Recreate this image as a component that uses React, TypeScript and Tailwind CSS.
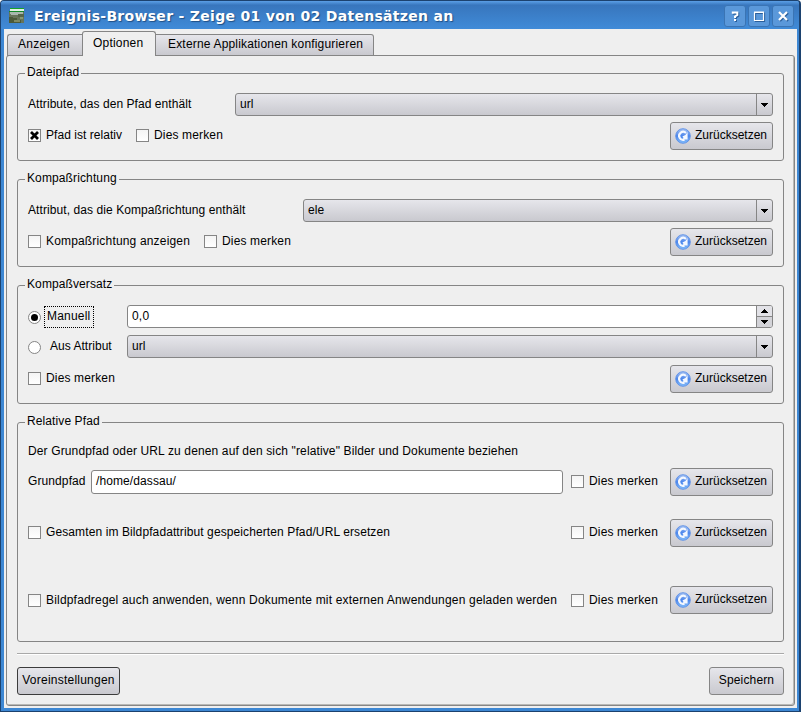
import type { ReactNode } from "react";

const raised = "bg-gradient-to-b from-[#e6e6eb] to-[#c9c9cf]";

function Text({ children, className = "" }: { children: ReactNode; className?: string }) {
  return <span className={`whitespace-nowrap leading-[14px] ${className}`}>{children}</span>;
}

function ResetIcon() {
  return (
    <svg width="16" height="16" viewBox="0 0 16 16" className="shrink-0">
      <defs>
        <linearGradient id="disc" x1="0" y1="0" x2="0" y2="1">
          <stop offset="0" stopColor="#a9c4f3" />
          <stop offset="0.5" stopColor="#4a85ec" />
          <stop offset="1" stopColor="#86bffa" />
        </linearGradient>
      </defs>
      <circle cx="8" cy="8" r="7.3" fill="url(#disc)" stroke="#5b8ee8" strokeWidth="0.9" />
      <path d="M11 5A4 4 0 1 0 9.5 11.6" fill="none" stroke="#f4f8ff" strokeWidth="2.2" />
      <path d="M12.6 4v7.4H8.2V9l-1-.6L10.4 7z" fill="#f4f8ff" />
    </svg>
  );
}

function ResetButton() {
  return (
    <button className={`flex h-7 w-[103px] shrink-0 items-center rounded-[3px] border border-[#858585] pl-1 ${raised}`}>
      <ResetIcon />
      <Text className="ml-1 pb-0.5">Zurücksetzen</Text>
    </button>
  );
}

interface CheckProps {
  label: string;
  checked?: boolean;
  tracking?: string;
  low?: boolean;
}

function Check({ label, checked = false, tracking = "tracking-[0.15px]", low = false }: CheckProps) {
  return (
    <label className={`flex shrink-0 items-center ${low ? "pt-px" : "pb-px"}`}>
      <span className="flex size-[13px] items-center justify-center border border-[#858585] bg-gradient-to-b from-[#f4f4f4] to-white">
        {checked && (
          <svg width="9" height="9" viewBox="0 0 9 9">
            <path d="M1 1l7 7M8 1L1 8" stroke="#000" strokeWidth="2.8" />
          </svg>
        )}
      </span>
      <Text className={`ml-[5px] pb-px ${tracking}`}>{label}</Text>
    </label>
  );
}

function Arrow({ up = false }: { up?: boolean }) {
  return (
    <svg width="8" height="4" viewBox="0 0 8 4" shapeRendering="crispEdges">
      <path d={up ? "M0 4L4 0l4 4z" : "M0 0h8L4 4z"} fill="#000" />
    </svg>
  );
}

function Combo({ value, className }: { value: string; className: string }) {
  return (
    <div className={`flex h-[23px] rounded-[3px] border border-[#858585] ${raised} ${className}`}>
      <div className="flex flex-1 items-center pb-0.5 pl-1">
        <Text className="tracking-[0.1px]">{value}</Text>
      </div>
      <div className="flex w-4 items-center justify-center border-l border-[#858585] pr-px">
        <Arrow />
      </div>
    </div>
  );
}

function Radio({ on = false }: { on?: boolean }) {
  return (
    <span className="mt-px flex size-[13px] shrink-0 items-center justify-center rounded-full border border-[#858585] bg-white">
      {on && <span className="size-[7px] rounded-full bg-black" />}
    </span>
  );
}

function Group({ title, className, tracking, children }: { title: string; className: string; tracking: string; children: ReactNode }) {
  return (
    <fieldset className={`min-w-0 rounded-[3px] border border-[#858585] px-2.5 ${className}`}>
      <legend className="-ml-[3px] flex h-[15px] items-start px-[2px]">
        <Text className={`-mt-px ${tracking}`}>{title}</Text>
      </legend>
      {children}
    </fieldset>
  );
}

function TitleButton({ children }: { children: ReactNode }) {
  return (
    <span className="flex h-[22px] w-[22px] items-center justify-center rounded-[3px] border border-[#3a74b4] bg-[#5a98da]">
      <svg width="14" height="14" viewBox="0 0 14 14" fill="none" className="drop-shadow-[1px_1px_0_#2b5f9b]">
        {children}
      </svg>
    </span>
  );
}

function PhotoIcon() {
  return (
    <svg width="16" height="16" viewBox="0 0 16 16" shapeRendering="crispEdges" className="mt-0.5">
      <path d="M1 0h14v4H1z" fill="#16a32c" />
      <path d="M1 1h14v2H1z" fill="#e4f2e6" />
      <path d="M0 3h15v1H0z" fill="#128a28" />
      <path d="M0 4h15v11H0z" fill="#66745a" />
      <path d="M1 4h13v2H9v1H2z" fill="#a9b8ae" />
      <path d="M0 9h4v1h4v2h4v3H0z" fill="#4b5a3a" />
      <path d="M9 6h6v3H9z" fill="#55654a" />
      <path d="M5 12h6v2H5z" fill="#7e8962" />
      <path d="M11 9h3v2h-3z" fill="#889873" />
    </svg>
  );
}

export default function App() {
  return (
    <div className="flex h-[712px] w-[801px] flex-col overflow-hidden rounded-t-[4px] border-t border-r-2 border-b border-l border-[#1c426f] bg-[#3d87d3] font-['Liberation_Sans',Arial,sans-serif] text-[12px] text-black">
      <header className="flex h-7 shrink-0 items-center bg-gradient-to-b from-[#5b9fe6] via-[#3876bd] via-15% to-[#408bd8] pr-[5px] pl-2">
        <PhotoIcon />
        <h1 className="ml-[9px] flex-1 pt-px font-['DejaVu_Sans',sans-serif] text-[14px] leading-5 font-bold tracking-[0.3px] whitespace-nowrap text-white [text-shadow:1px_1px_1px_#1f4f86]">
          Ereignis-Browser - Zeige 01 von 02 Datensätzen an
        </h1>
        <div className="flex gap-[2px] pt-px">
          <TitleButton>
            <path d="M4.8 4.8V3.5h4.5V6L7 7.5V9M7 10v2" stroke="#fff" strokeWidth="2" />
          </TitleButton>
          <TitleButton>
            <path d="M2.5 3.5h9v8h-9zM2 3.2h10" stroke="#fff" strokeWidth="1.2" />
          </TitleButton>
          <TitleButton>
            <path d="M3 3l8 8M11 3l-8 8" stroke="#fff" strokeWidth="2.2" />
          </TitleButton>
        </div>
      </header>

      <main className="mr-[2px] mb-[3px] ml-[3px] flex flex-1 flex-col bg-[#efefef] pr-[2px] pb-0.5 pl-[2px]">
        <nav className="relative z-10 -mb-px flex h-[27px] items-end pt-0.5">
          <div className={`ml-px flex h-[22px] w-[75px] items-center rounded-tl-[3px] border border-r-0 border-[#858585] pb-0.5 pl-2.5 ${raised}`}>
            <Text className="tracking-[0.25px]">Anzeigen</Text>
          </div>
          <div className="flex h-[25px] w-[74px] items-center rounded-t-[3px] border border-b-0 border-[#858585] bg-[#efefef] pb-0.5 pl-2.5">
            <Text className="tracking-[0.2px]">Optionen</Text>
          </div>
          <div className={`flex h-[22px] w-[218px] items-center rounded-tr-[3px] border border-l-0 border-[#858585] pb-0.5 pl-3 ${raised}`}>
            <Text className="tracking-[0.18px]">Externe Applikationen konfigurieren</Text>
          </div>
        </nav>

        <section className="flex flex-1 flex-col rounded-[3px] border border-[#858585] px-2.5 pt-2.5 shadow-[inset_-1px_-1px_0_#b9b9b7]">
          <div className="flex flex-col gap-[11px]">
            <Group title="Dateipfad" className="h-[95px]" tracking="tracking-[0.1px]">
              <div className="mt-3 flex items-center">
                <Text className="w-[207px] pb-px tracking-[0.06px]">Attribute, das den Pfad enthält</Text>
                <Combo value="url" className="flex-1" />
              </div>
              <div className="mt-1.5 flex items-center">
                <Check label="Pfad ist relativ" checked tracking="tracking-[0.04px]" />
                <div className="ml-[14px] flex-1">
                  <Check label="Dies merken" />
                </div>
                <ResetButton />
              </div>
            </Group>

            <Group title="Kompaßrichtung" className="h-[95px]" tracking="tracking-[0.12px]">
              <div className="mt-3 flex items-center">
                <Text className="w-[275px] pb-px tracking-[0.08px]">Attribut, das die Kompaßrichtung enthält</Text>
                <Combo value="ele" className="flex-1" />
              </div>
              <div className="mt-1.5 flex items-center">
                <Check label="Kompaßrichtung anzeigen" tracking="tracking-[0.17px]" />
                <div className="ml-[14px] flex-1">
                  <Check label="Dies merken" />
                </div>
                <ResetButton />
              </div>
            </Group>

            <Group title="Kompaßversatz" className="h-[126px]" tracking="tracking-[0.1px]">
              <div className="mt-3 flex h-[23px] items-center">
                <div className="flex w-[99px] items-center">
                  <Radio on />
                  <span className="ml-[3px] flex h-[22px] w-[50px] items-center border border-dotted border-black pb-0.5 pl-[2px]">
                    <Text className="tracking-[0.2px]">Manuell</Text>
                  </span>
                </div>
                <div className="flex h-[23px] flex-1 overflow-hidden rounded-[3px] border border-[#858585] bg-white">
                  <div className="flex flex-1 items-center pb-px pl-1">
                    <Text className="tracking-[0.2px]">0,0</Text>
                  </div>
                  <div className="flex w-4 flex-col border-l border-[#858585]">
                    <div className="flex flex-1 items-center justify-center border-b border-[#858585] bg-[#e2e2e7] pr-px pb-px">
                      <Arrow up />
                    </div>
                    <div className="flex h-2.5 items-center justify-center bg-[#d3d3d8] pr-px">
                      <Arrow />
                    </div>
                  </div>
                </div>
              </div>
              <div className="mt-[7px] flex items-center">
                <div className="flex w-[99px] items-center">
                  <Radio />
                  <Text className="ml-[9px] pb-px tracking-[0.03px]">Aus Attribut</Text>
                </div>
                <Combo value="url" className="flex-1" />
              </div>
              <div className="mt-[7px] flex items-center justify-between">
                <Check label="Dies merken" />
                <ResetButton />
              </div>
            </Group>

            <Group title="Relative Pfad" className="h-[227px]" tracking="tracking-[0.1px]">
              <div className="mt-3 flex h-[18px] items-center">
                <Text className="tracking-[0.13px]">
                  Der Grundpfad oder URL zu denen auf den sich "relative" Bilder und Dokumente beziehen
                </Text>
              </div>
              <div className="mt-2 flex items-center">
                <Text className="w-[63px] pb-0.5 tracking-[0.1px]">Grundpfad</Text>
                <div className="flex h-6 w-[472px] items-center rounded-[3px] border border-[#858585] bg-white pb-0.5 pl-1">
                  <Text className="tracking-[0.1px]">/home/dassau/</Text>
                </div>
                <div className="ml-2 flex-1">
                  <Check label="Dies merken" />
                </div>
                <ResetButton />
              </div>
              <div className="mt-[23px] flex items-center">
                <div className="w-[543px]">
                  <Check label="Gesamten im Bildpfadattribut gespeicherten Pfad/URL ersetzen" tracking="tracking-[0.105px]" />
                </div>
                <div className="flex-1">
                  <Check label="Dies merken" />
                </div>
                <ResetButton />
              </div>
              <div className="mt-[39px] flex items-center">
                <div className="w-[543px]">
                  <Check low label="Bildpfadregel auch anwenden, wenn Dokumente mit externen Anwendungen geladen werden" tracking="tracking-[0.185px]" />
                </div>
                <div className="flex-1">
                  <Check low label="Dies merken" />
                </div>
                <ResetButton />
              </div>
            </Group>
          </div>

          <hr className="mt-[11px] h-[2px] border-t border-b border-t-[#a9a9a9] border-b-white" />

          <footer className="mt-3 flex justify-between">
            <button className={`flex h-7 w-[103px] items-center justify-center rounded-[3px] border border-[#3c3c3c] pb-0.5 ${raised}`}>
              <Text className="tracking-[0.23px]">Voreinstellungen</Text>
            </button>
            <button className={`flex h-7 w-[75px] items-center justify-center rounded-[3px] border border-[#858585] pb-0.5 ${raised}`}>
              <Text className="tracking-[0.15px]">Speichern</Text>
            </button>
          </footer>
        </section>
      </main>
    </div>
  );
}
